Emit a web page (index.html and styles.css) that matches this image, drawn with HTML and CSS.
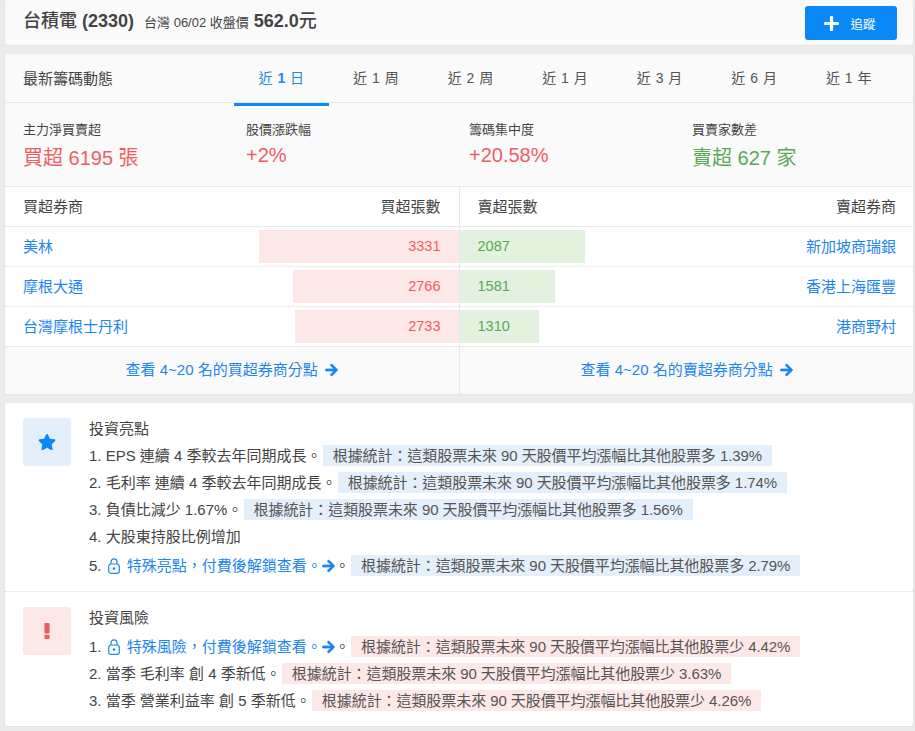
FILE: index.html
```html
<!DOCTYPE html>
<html lang="zh-Hant">
<head>
  <meta charset="UTF-8">
  <title>台積電 (2330) 籌碼動態</title>
  <meta name="viewport" content="width=device-width, initial-scale=1.0">
  <link rel="stylesheet" href="styles.css">
</head>
<body>

  <svg class="icon-defs" aria-hidden="true">
    <symbol id="i-arrow" viewBox="0 0 448 512"><path d="M190.5 66.9l22.2-22.2c9.4-9.4 24.6-9.4 33.9 0L441 239c9.4 9.4 9.4 24.6 0 33.9L246.6 467.3c-9.4 9.4-24.6 9.4-33.9 0l-22.2-22.2c-9.5-9.5-9.3-25 .4-34.3L311.4 296H24c-13.3 0-24-10.7-24-24v-32c0-13.3 10.7-24 24-24h287.4L190.9 101.2c-9.8-9.3-10-24.8-.4-34.3z"/></symbol>
    <symbol id="i-lock" viewBox="0 0 12 16"><rect x="0.7" y="6" width="10.6" height="9.3" rx="2.4" fill="none" stroke="currentColor" stroke-width="1.2"/><path d="M3 6V3.8a3 3 0 0 1 6 0V6" fill="none" stroke="currentColor" stroke-width="1.2"/><circle cx="6" cy="10.6" r="1.3"/></symbol>
  </svg>

  <header class="card stock-bar">
    <div class="stock-info">
      <span class="stock-name">台積電 <b>(2330)</b></span>
      <span class="stock-date">台灣 06/02 收盤價</span>
      <span class="stock-price"><b>562.0</b>元</span>
    </div>
    <a class="track-btn">
      <svg class="plus-icon" viewBox="0 0 448 512"><path d="M416 208H272V64c0-17.67-14.33-32-32-32h-32c-17.67 0-32 14.33-32 32v144H32c-17.67 0-32 14.33-32 32v32c0 17.67 14.33 32 32 32h144v144c0 17.67 14.33 32 32 32h32c17.67 0 32-14.33 32-32V304h144c17.67 0 32-14.33 32-32v-32c0-17.67-14.33-32-32-32z"/></svg>
      追蹤
    </a>
  </header>

  <section class="card">
    <div class="tab-bar">
      <h2 class="tab-title">最新籌碼動態</h2>
      <div class="tabs">
        <a class="tab active">近 <b>1</b> 日</a>
        <a class="tab">近 1 周</a>
        <a class="tab">近 2 周</a>
        <a class="tab">近 1 月</a>
        <a class="tab">近 3 月</a>
        <a class="tab">近 6 月</a>
        <a class="tab">近 1 年</a>
      </div>
    </div>

    <div class="stats">
      <div class="stat">
        <div class="stat-label">主力淨買賣超</div>
        <div class="stat-value cjk red">買超 6195 張</div>
      </div>
      <div class="stat">
        <div class="stat-label">股價漲跌幅</div>
        <div class="stat-value red">+2%</div>
      </div>
      <div class="stat">
        <div class="stat-label">籌碼集中度</div>
        <div class="stat-value red">+20.58%</div>
      </div>
      <div class="stat">
        <div class="stat-label">買賣家數差</div>
        <div class="stat-value cjk green">賣超 627 家</div>
      </div>
    </div>

    <div class="brokers">
      <div class="panel panel-buy">
        <div class="panel-head"><span>買超券商</span><span>買超張數</span></div>
        <div class="broker-row">
          <a class="broker">美林</a>
          <div class="bar bar-buy" style="width: 200px">3331</div>
        </div>
        <div class="broker-row">
          <a class="broker">摩根大通</a>
          <div class="bar bar-buy" style="width: 166px">2766</div>
        </div>
        <div class="broker-row">
          <a class="broker">台灣摩根士丹利</a>
          <div class="bar bar-buy" style="width: 164px">2733</div>
        </div>
        <a class="panel-foot">查看 4~20 名的買超券商分點 <svg class="arrow"><use href="#i-arrow"/></svg></a>
      </div>
      <div class="panel panel-sell">
        <div class="panel-head"><span>賣超張數</span><span>賣超券商</span></div>
        <div class="broker-row">
          <div class="bar bar-sell" style="width: 125px">2087</div>
          <a class="broker">新加坡商瑞銀</a>
        </div>
        <div class="broker-row">
          <div class="bar bar-sell" style="width: 95px">1581</div>
          <a class="broker">香港上海匯豐</a>
        </div>
        <div class="broker-row">
          <div class="bar bar-sell" style="width: 79px">1310</div>
          <a class="broker">港商野村</a>
        </div>
        <a class="panel-foot">查看 4~20 名的賣超券商分點 <svg class="arrow"><use href="#i-arrow"/></svg></a>
      </div>
    </div>
  </section>

  <section class="card">
    <div class="insight">
      <div class="insight-icon good">
        <svg class="star-icon" viewBox="0 0 576 512"><path d="M259.3 17.8L194 150.2 47.9 171.5c-26.2 3.8-36.7 36.1-17.7 54.6l105.7 103-25 145.5c-4.5 26.3 23.2 46 46.4 33.7L288 439.6l130.7 68.7c23.2 12.2 50.9-7.4 46.4-33.7l-25-145.5 105.7-103c19-18.5 8.5-50.8-17.7-54.6L382 150.2 316.7 17.8c-11.7-23.6-45.6-23.9-57.4 0z"/></svg>
      </div>
      <div class="insight-body">
        <h3 class="insight-title">投資亮點</h3>
        <ol class="insight-list">
          <li>1. EPS 連續 4 季較去年同期成長。 <span class="chip chip-good">根據統計：這類股票未來 90 天股價平均漲幅比其他股票多 1.39%</span></li>
          <li>2. 毛利率 連續 4 季較去年同期成長。 <span class="chip chip-good">根據統計：這類股票未來 90 天股價平均漲幅比其他股票多 1.74%</span></li>
          <li>3. 負債比減少 1.67%。 <span class="chip chip-good">根據統計：這類股票未來 90 天股價平均漲幅比其他股票多 1.56%</span></li>
          <li>4. 大股東持股比例增加</li>
          <li class="locked">5. <a class="unlock"><svg class="lock"><use href="#i-lock"/></svg> 特殊亮點，付費後解鎖查看。<svg class="arrow"><use href="#i-arrow"/></svg></a>。 <span class="chip chip-good">根據統計：這類股票未來 90 天股價平均漲幅比其他股票多 2.79%</span></li>
        </ol>
      </div>
    </div>
    <div class="insight">
      <div class="insight-icon bad">
        <svg class="bang-icon" viewBox="0 0 6 16"><rect x="0.4" y="0" width="5.2" height="10.4" rx="1"/><rect x="0.4" y="11.8" width="5.2" height="4.2" rx="1"/></svg>
      </div>
      <div class="insight-body">
        <h3 class="insight-title">投資風險</h3>
        <ol class="insight-list">
          <li class="locked">1. <a class="unlock"><svg class="lock"><use href="#i-lock"/></svg> 特殊風險，付費後解鎖查看。<svg class="arrow"><use href="#i-arrow"/></svg></a>。 <span class="chip chip-bad">根據統計：這類股票未來 90 天股價平均漲幅比其他股票少 4.42%</span></li>
          <li>2. 當季 毛利率 創 4 季新低。 <span class="chip chip-bad">根據統計：這類股票未來 90 天股價平均漲幅比其他股票少 3.63%</span></li>
          <li>3. 當季 營業利益率 創 5 季新低。 <span class="chip chip-bad">根據統計：這類股票未來 90 天股價平均漲幅比其他股票少 4.26%</span></li>
        </ol>
      </div>
    </div>
  </section>

</body>
</html>
```

FILE: styles.css
```css
html, body {
  overflow: hidden;
}

body {
  font-family: "Liberation Sans", "Noto Sans CJK TC", sans-serif;
  font-size: 15px;
  color: #444;
  background: #ebebeb;
  margin: 0;
  padding: 0 1px 0 4px;
}

a {
  color: #1a86f0;
}

.icon-defs {
  display: block;
  width: 0;
  height: 0;
}

.card {
  background: #fff;
  border: 1px solid #e4e4e4;
  border-top-color: #e8e8e8;
  border-radius: 3px;
  margin-bottom: 7px;
}

/* top stock bar */
.stock-bar {
  display: flex;
  justify-content: space-between;
  align-items: center;
  height: 46px;
  box-sizing: border-box;
  border-top: 0;
  padding: 0 16px 0 18px;
  background: #fafafa;
}

.stock-info {
  display: flex;
  align-items: baseline;
  margin-top: -7px;
}

.stock-name {
  font-size: 18px;
  font-weight: 500;
  margin-right: 10px;
}

.stock-date {
  font-size: 13px;
  margin-right: 5px;
}

.stock-price {
  font-size: 18px;
  font-weight: 500;
}

.track-btn {
  display: flex;
  align-items: center;
  justify-content: center;
  gap: 11px;
  width: 92px;
  height: 34px;
  padding-right: 2px;
  box-sizing: border-box;
  background: #0a88f7;
  border-radius: 3px;
  color: #fff;
  font-size: 12.5px;
  margin-top: 1px;
}

.plus-icon {
  width: 15px;
  height: 17px;
  fill: #fff;
}

/* tabs */
.tab-bar {
  display: flex;
  align-items: stretch;
  height: 48px;
  padding: 0 17px 0 18px;
  background: #fafafa;
  border-bottom: 1px solid #e8e8e8;
}

.tab-title {
  width: 211px;
  margin: 0;
  font-size: 15px;
  font-weight: 400;
  line-height: 49px;
}

.tabs {
  flex: 1;
  display: grid;
  grid-template-columns: repeat(7, 1fr);
}

.tab {
  color: #555;
  font-size: 14px;
  word-spacing: 1px;
  line-height: 49px;
  text-align: center;
}

.tab.active {
  color: #1a86f0;
  border-bottom: 3px solid #0a88f7;
}

/* summary numbers */
.stats {
  display: grid;
  grid-template-columns: repeat(4, 223px);
  height: 83px;
  padding: 0 0 0 18px;
  background: #fafafa;
  border-bottom: 1px solid #e8e8e8;
}

.stat-label {
  font-size: 13px;
  line-height: 18px;
  margin-top: 18px;
  margin-bottom: 2px;
}

.stat-value {
  font-size: 20px;
  line-height: 28px;
}

.stat-value.cjk {
  padding-top: 3px;
}

.red {
  color: #ef5d64;
}

.green {
  color: #5aa855;
}

/* broker tables */
.brokers {
  display: flex;
}

.panel {
  flex: 1;
  min-width: 0;
}

.panel-buy {
  border-right: 1px solid #e8e8e8;
}

.panel-head {
  display: flex;
  justify-content: space-between;
  height: 39px;
  line-height: 39px;
  padding: 0 18px;
  font-size: 15px;
  border-bottom: 1px solid #e8e8e8;
}

.panel-sell .panel-head {
  padding-right: 17px;
}

.broker-row {
  display: flex;
  justify-content: space-between;
  align-items: center;
  height: 39px;
  border-bottom: 1px dotted #ddd;
  font-size: 15px;
}

.broker-row:nth-child(4) {
  border-bottom: 1px solid #e8e8e8;
}

.broker {
  margin-top: -2px;
}

.panel-buy .broker {
  padding-left: 18px;
}

.panel-sell .broker {
  padding-right: 17px;
}

.bar {
  height: 33px;
  line-height: 33px;
  font-size: 14.5px;
  box-sizing: border-box;
}

.bar-buy {
  background: #fee7e7;
  color: #ef5d64;
  text-align: right;
  padding-right: 18px;
}

.bar-sell {
  background: #e3f2df;
  color: #5aa855;
  padding-left: 18px;
}

.panel-foot {
  display: block;
  height: 47px;
  line-height: 45px;
  text-align: center;
  font-size: 15px;
  background: #fafafa;
}

.panel-sell .panel-foot {
  padding-left: 1px;
}

.arrow {
  display: inline-block;
  width: 13px;
  height: 14px;
  fill: #1a86f0;
  stroke: #1a86f0;
  stroke-width: 24;
  vertical-align: -2px;
  margin-left: 3px;
}

/* highlights and risks */
.insight {
  display: flex;
  gap: 18px;
  padding: 15px 18px 12px;
}

.insight + .insight {
  border-top: 1px dotted #ddd;
}

.insight-icon {
  display: flex;
  align-items: center;
  justify-content: center;
  flex: none;
  width: 48px;
  height: 48px;
  border-radius: 3px;
}

.insight-icon.good {
  background: #e3effb;
}

.insight-icon.bad {
  background: #fee7e7;
}

.star-icon {
  width: 18px;
  height: 16px;
  fill: #0a88f7;
}

.bang-icon {
  width: 6px;
  height: 16px;
  fill: #ef5d64;
}

.insight-body {
  min-width: 0;
}

.insight-title {
  margin: 0;
  height: 24px;
  line-height: 21px;
  font-size: 15px;
  font-weight: 400;
}

.insight-list {
  list-style: none;
  margin: 0;
  padding: 0;
}

.insight-list li {
  height: 27px;
  line-height: 27px;
  white-space: nowrap;
}

.insight-list li.locked {
  height: 27px;
  padding-top: 2px;
}

.chip {
  display: inline-block;
  height: 21px;
  line-height: 21px;
  padding: 0 10px;
  margin-left: -3px;
  letter-spacing: -0.07px;
  color: #555;
}

.chip-good {
  background: #e3effb;
}

.chip-bad {
  background: #fee7e7;
}

.lock {
  display: inline-block;
  width: 12px;
  height: 16px;
  fill: #1a86f0;
  color: #1a86f0;
  vertical-align: -3px;
  margin-left: 2px;
  margin-right: 3px;
}

.unlock .arrow {
  margin-left: 0;
}
```
